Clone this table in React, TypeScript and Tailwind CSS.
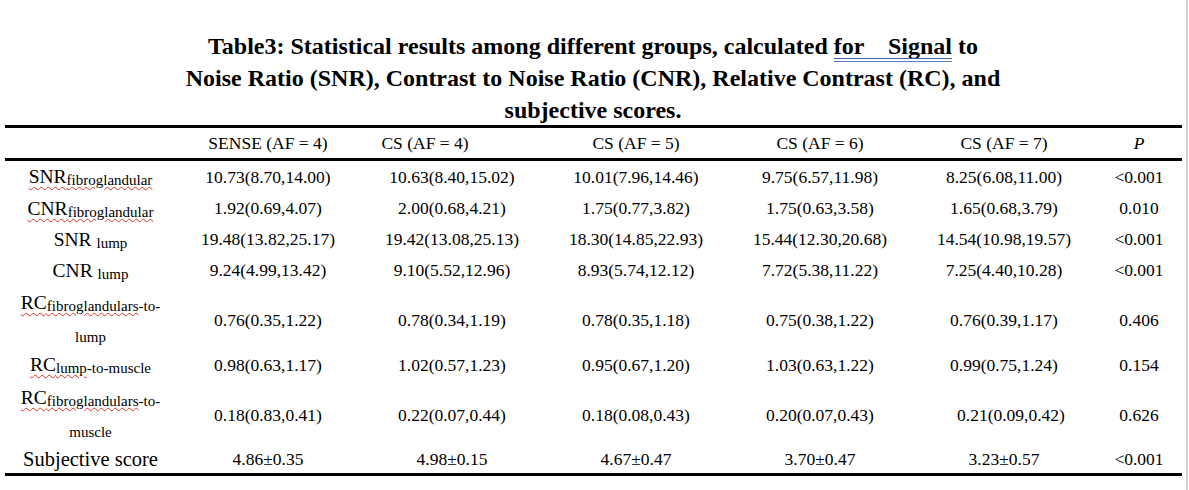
import React from "react";

type Row = {
  label: React.ReactNode;
  vals: string[];
  p: string;
  h: string;
};

const Sub = ({ children }: { children: React.ReactNode }) => (
  <span className="relative top-[2px] text-[15px]">{children}</span>
);

const rows: Row[] = [
  {
    label: (
      <span className="underline decoration-wavy decoration-[#e0302a] decoration-1 underline-offset-[3px]">
        SNR<Sub>fibroglandular</Sub>
      </span>
    ),
    vals: ["10.73(8.70,14.00)", "10.63(8.40,15.02)", "10.01(7.96,14.46)", "9.75(6.57,11.98)", "8.25(6.08,11.00)"],
    p: "<0.001",
    h: "h-[32px]",
  },
  {
    label: (
      <span className="underline decoration-wavy decoration-[#e0302a] decoration-1 underline-offset-[3px]">
        CNR<Sub>fibroglandular</Sub>
      </span>
    ),
    vals: ["1.92(0.69,4.07)", "2.00(0.68,4.21)", "1.75(0.77,3.82)", "1.75(0.63,3.58)", "1.65(0.68,3.79)"],
    p: "0.010",
    h: "h-[31px]",
  },
  {
    label: (
      <span>
        SNR <Sub>lump</Sub>
      </span>
    ),
    vals: ["19.48(13.82,25.17)", "19.42(13.08,25.13)", "18.30(14.85,22.93)", "15.44(12.30,20.68)", "14.54(10.98,19.57)"],
    p: "<0.001",
    h: "h-[31px]",
  },
  {
    label: (
      <span>
        CNR <Sub>lump</Sub>
      </span>
    ),
    vals: ["9.24(4.99,13.42)", "9.10(5.52,12.96)", "8.93(5.74,12.12)", "7.72(5.38,11.22)", "7.25(4.40,10.28)"],
    p: "<0.001",
    h: "h-[31px]",
  },
  {
    label: (
      <div className="flex flex-col items-center">
        <div className="h-[34px] leading-[34px]">
          <span className="underline decoration-wavy decoration-[#e0302a] decoration-1 underline-offset-[3px]">
            RC<Sub>fibroglandulars</Sub>
          </span>
          <Sub>-to-</Sub>
        </div>
        <div className="h-[34px] leading-[34px] text-[15px]">lump</div>
      </div>
    ),
    vals: ["0.76(0.35,1.22)", "0.78(0.34,1.19)", "0.78(0.35,1.18)", "0.75(0.38,1.22)", "0.76(0.39,1.17)"],
    p: "0.406",
    h: "h-[64px]",
  },
  {
    label: (
      <span>
        <span className="underline decoration-wavy decoration-[#e0302a] decoration-1 underline-offset-[3px]">
          RC<Sub>lump</Sub>
        </span>
        <Sub>-to-muscle</Sub>
      </span>
    ),
    vals: ["0.98(0.63,1.17)", "1.02(0.57,1.23)", "0.95(0.67,1.20)", "1.03(0.63,1.22)", "0.99(0.75,1.24)"],
    p: "0.154",
    h: "h-[30px]",
  },
  {
    label: (
      <div className="flex flex-col items-center">
        <div className="h-[35px] leading-[35px]">
          <span className="underline decoration-wavy decoration-[#e0302a] decoration-1 underline-offset-[3px]">
            RC<Sub>fibroglandulars</Sub>
          </span>
          <Sub>-to-</Sub>
        </div>
        <div className="h-[35px] leading-[35px] text-[15px]">muscle</div>
      </div>
    ),
    vals: ["0.18(0.83,0.41)", "0.22(0.07,0.44)", "0.18(0.08,0.43)", "0.20(0.07,0.43)", "0.21(0.09,0.42)"],
    p: "0.626",
    h: "h-[64px]",
  },
  {
    label: <span className="text-[20.5px]">Subjective score</span>,
    vals: ["4.86±0.35", "4.98±0.15", "4.67±0.47", "3.70±0.47", "3.23±0.57"],
    p: "<0.001",
    h: "h-[29px]",
  },
];

const headers = [
  { t: "SENSE (AF = 4)", c: "" },
  { t: "CS (AF = 4)", c: "pr-[54px]" },
  { t: "CS (AF = 5)", c: "" },
  { t: "CS (AF = 6)", c: "" },
  { t: "CS (AF = 7)", c: "" },
];

const gridCols = "grid grid-cols-[171px_184px_184px_184px_184px_184px_86px]";

export default function App() {
  return (
    <div className="w-[1189px] h-[490px] bg-white text-black font-['Liberation_Serif','Times_New_Roman',serif] overflow-hidden">
      <div className="w-[1188px] h-[490px] border-r-2 border-[#d3d3d3]">
        <div className="pt-[30px] text-center font-bold text-[24px] leading-[32px] font-['Liberation_Serif',serif]">
          <div>
            Table3: Statistical results among different groups, calculated{" "}
            <span className="relative whitespace-pre">
              {"for    Signal"}
              <span className="absolute left-0 right-0 top-[25px] h-px bg-[#3f5f9f]"></span>
              <span className="absolute left-0 right-0 top-[28px] h-px bg-[#5b7fc6]"></span>
            </span>{" "}
            to
          </div>
          <div>Noise Ratio (SNR), Contrast to Noise Ratio (CNR), Relative Contrast (RC), and</div>
          <div>subjective scores.</div>
        </div>

        <div className="ml-[5px] w-[1177px] mt-[-1px]">
          <div className="h-[3px] bg-black"></div>
          <div className={`${gridCols} h-[30px] text-[17.5px] items-center font-normal`}>
            <div></div>
            {headers.map((h) => (
              <div key={h.t} className={`text-center ${h.c}`}>
                {h.t}
              </div>
            ))}
            <div className="text-center italic">P</div>
          </div>
          <div className="h-[3px] bg-black"></div>
          {rows.map((r, i) => (
            <div key={i} className={`${gridCols} ${r.h} items-center`}>
              <div className="flex justify-center text-[19.5px]">{r.label}</div>
              {r.vals.map((v, j) => (
                <div
                  key={j}
                  className={`text-center text-[17.5px] ${i === 6 && j === 4 ? "pl-[14px]" : ""}`}
                >
                  {v}
                </div>
              ))}
              <div className="text-center text-[17.5px]">{r.p}</div>
            </div>
          ))}
          <div className="h-[3px] bg-black"></div>
        </div>
      </div>
    </div>
  );
}
